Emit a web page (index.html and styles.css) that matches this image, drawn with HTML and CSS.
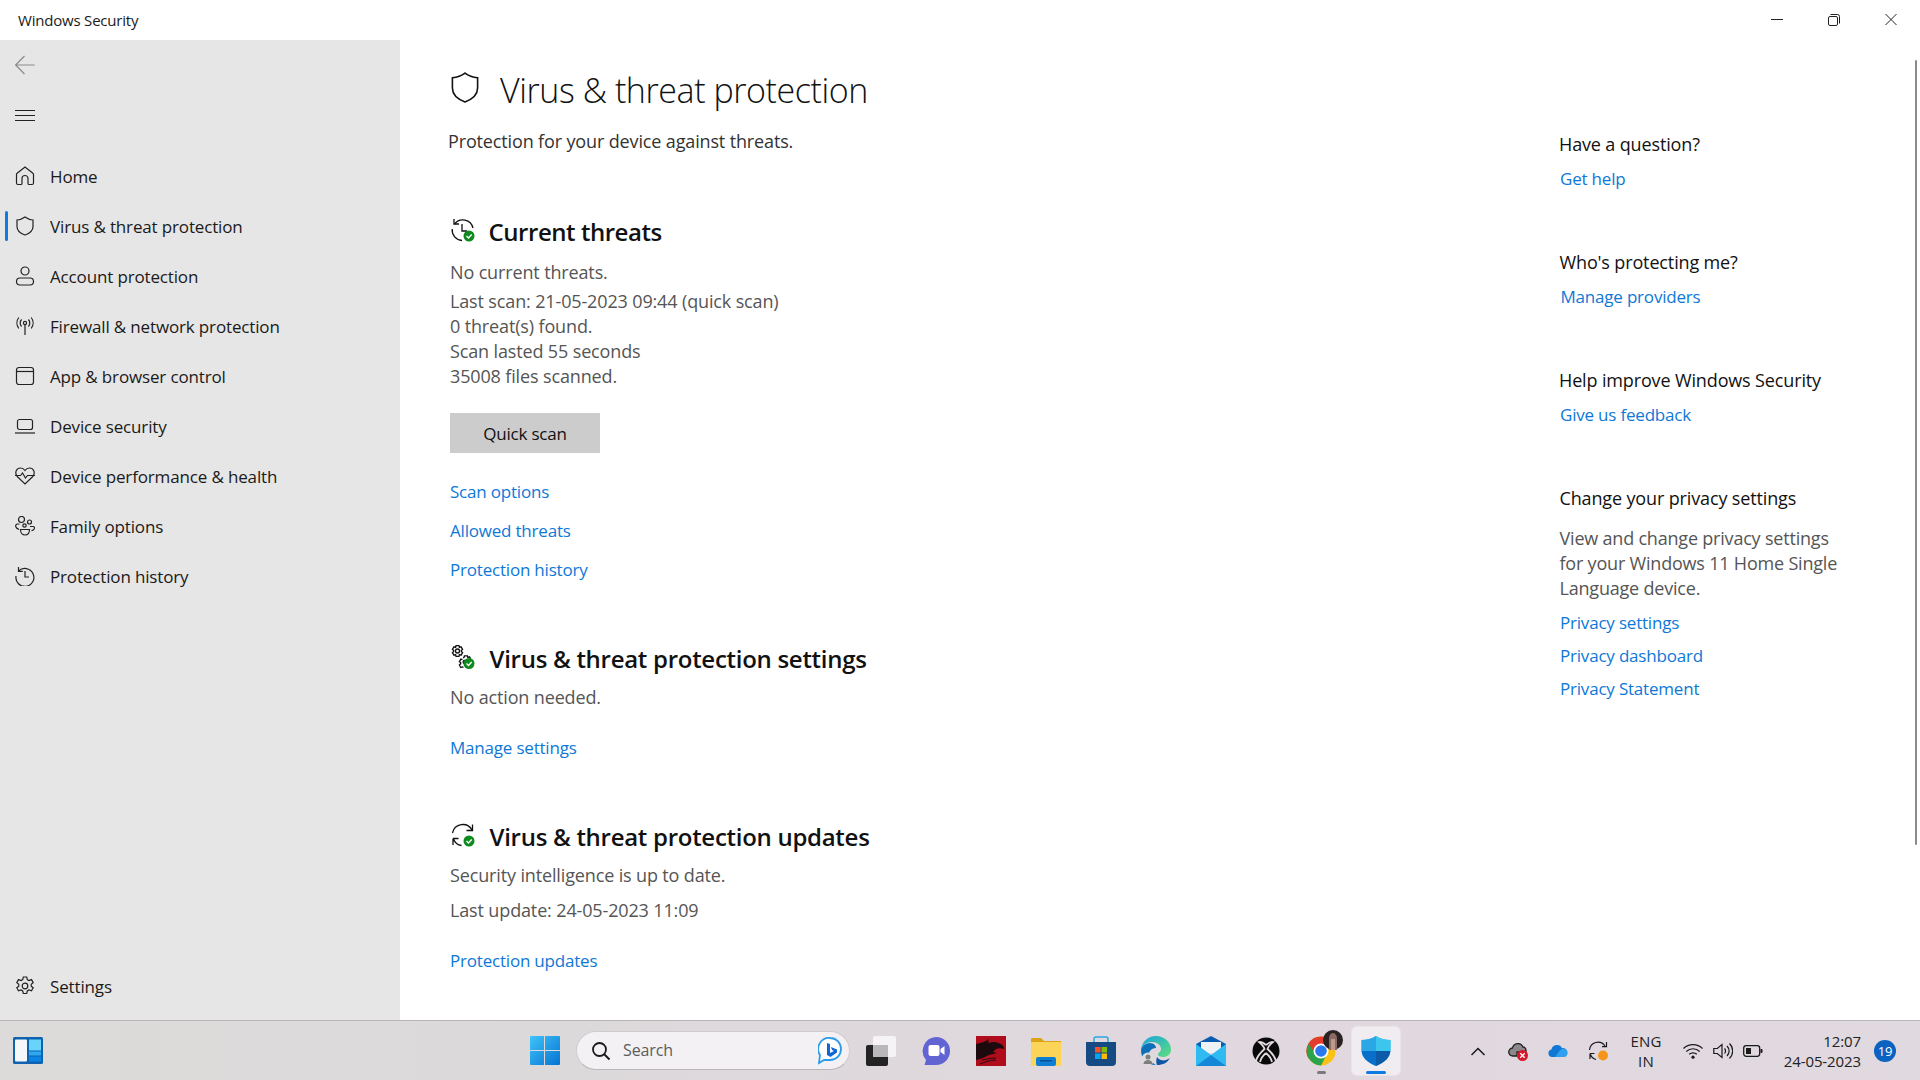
FILE: index.html
```html
<!DOCTYPE html>
<html lang="en">
<head>
<meta charset="utf-8">
<title>Windows Security</title>
<link rel="stylesheet" href="styles.css">
</head>
<body>
<div class="window">
  <header class="titlebar">
    <span class="app-name">Windows Security</span>
    <div class="controls">
      <span class="control"><svg width="14" height="14" viewBox="0 0 14 14"><path d="M1 6.500h12" stroke="#222" stroke-width="1" fill="none"/></svg></span>
      <span class="control"><svg width="14" height="14" viewBox="0 0 14 14" fill="none" stroke="#222" stroke-width="1"><rect x="1.500" y="3.500" width="9" height="9" rx="1.500"/><path d="M3.500 1.500h7a2 2 0 0 1 2 2v7"/></svg></span>
      <span class="control"><svg width="14" height="14" viewBox="0 0 14 14"><path d="M1.500 1l11 11M12.500 1l-11 11" stroke="#222" stroke-width="1" fill="none"/></svg></span>
    </div>
  </header>
  <div class="body">
    <nav class="sidebar">
      <div class="tool"><svg class="ico ico-back" viewBox="0 0 20 20"><path d="M.7 10h19M9.500 1L.7 10l8.800 9"/></svg></div>
      <div class="tool"><svg class="ico" viewBox="0 0 20 20"><path d="M0 5.500h20M0 10.500h20M0 15.500h20"/></svg></div>
      <ul class="nav">
        <li class="nav-item"><svg class="ico" viewBox="0 0 20 20"><path d="M1.500 17V8.500a1.500 1.500 0 0 1 .6-1.200L10 1l7.900 6.300a1.500 1.500 0 0 1 .6 1.200V17a1.500 1.500 0 0 1-1.500 1.500h-3a1 1 0 0 1-1-1v-5a3 3 0 0 0-6 0v5a1 1 0 0 1-1 1H3A1.500 1.500 0 0 1 1.500 17z"/></svg><span>Home</span></li>
        <li class="nav-item active"><svg class="ico" viewBox="0 0 20 20"><path d="M10 1c2.500 1.800 5 2.800 8 3v6.500c0 3.800-2.600 6.700-8 8.500-5.400-1.800-8-4.700-8-8.500V4c3-.2 5.500-1.200 8-3z"/></svg><span>Virus &amp; threat protection</span></li>
        <li class="nav-item"><svg class="ico" viewBox="0 0 20 20"><circle cx="10" cy="5" r="4"/><rect x="1.500" y="12" width="17" height="7" rx="3.500"/></svg><span>Account protection</span></li>
        <li class="nav-item"><svg class="ico" viewBox="0 0 20 20"><circle cx="10" cy="7" r="1.600"/><path d="M10 9v10M6.600 3.500a5 5 0 0 0 0 7M13.400 3.500a5 5 0 0 1 0 7M3.800 1.500a9 9 0 0 0 0 11M16.200 1.500a9 9 0 0 1 0 11"/></svg><span>Firewall &amp; network protection</span></li>
        <li class="nav-item"><svg class="ico" viewBox="0 0 20 20"><rect x="1.500" y="1.500" width="17" height="17" rx="2.500"/><path d="M1.500 5.500h17"/></svg><span>App &amp; browser control</span></li>
        <li class="nav-item"><svg class="ico" viewBox="0 0 20 20"><rect x="2.500" y="3.500" width="15" height="10" rx="2"/><path d="M0 17h20"/></svg><span>Device security</span></li>
        <li class="nav-item"><svg class="ico" viewBox="0 0 20 20"><path d="M2.200 10.500C-.8 6.500 1.500 2 5.500 2c2 0 3.500 1 4.500 2.500C11 3 12.500 2 14.500 2c4 0 6.300 4.500 3.300 8.500L10 18z"/><path d="M0 9.500h5.500l2-2.500 3 5 2-2.500H20"/></svg><span>Device performance &amp; health</span></li>
        <li class="nav-item"><svg class="ico" viewBox="0 0 20 20"><circle cx="6.500" cy="3.500" r="3"/><circle cx="14.500" cy="6" r="2"/><circle cx="9.500" cy="9.500" r="1.700"/><path d="M4.500 8H2.500a2 2 0 0 0-1.800 2.500c.5 1.500 1.500 2.500 3.300 2.800M15 10.500h3a1.500 1.500 0 0 1 1.500 2c-.5 1.300-1.500 2-3 2.200M5.500 13.500h9c0 3.500-2 5.500-4.500 5.500s-4.500-2-4.500-5.500z"/></svg><span>Family options</span></li>
        <li class="nav-item"><svg class="ico" viewBox="0 0 20 20"><path d="M3.500 1v4.300h4.300"/><path d="M3.600 5A9 9 0 1 1 1 10"/><path d="M10 5v6h4"/></svg><span>Protection history</span></li>
      </ul>
      <div class="nav-item nav-settings"><svg class="ico" viewBox="0 0 20 20"><circle cx="10" cy="10" r="2.800"/><path d="M8.300 1h3.400l.6 2.600 1.700.9 2.500-.9 1.700 3-2 1.700v1.800l2 1.600-1.700 3-2.500-.8-1.700 1-.6 2.600H8.300l-.6-2.600-1.700-1-2.500.8-1.700-3 2-1.600V8.300l-2-1.700 1.700-3 2.500.9 1.700-.9z"/></svg><span>Settings</span></div>
    </nav>

    <main class="main">
      <div class="page-head">
        <svg class="page-icon" viewBox="0 0 30 34"><path d="M15 1c4 3 8.500 4.500 13.500 5v11c0 6.500-4.500 11.500-13.500 15C6 28.500 1.500 23.500 1.500 17V6C6.500 5.500 11 4 15 1z"/></svg>
        <h1 class="page-title">Virus &amp; threat protection</h1>
      </div>
      <p class="page-sub">Protection for your device against threats.</p>

      <section class="sec sec-first">
        <div class="sec-head">
          <svg class="sec-icon" viewBox="0 0 24 24"><path class="line" d="M3 1v5h5"/><path class="line" d="M3.500 6A10.500 10.500 0 0 1 22 10M1.200 11A10.500 10.500 0 0 0 11 22.500"/><path class="line" d="M11 6v7h5"/><circle cx="18" cy="18" r="5.500" fill="#0f8a1f"/><path d="M15.500 18l2 2 3.200-3.500" stroke="#fff" stroke-width="1.400" fill="none"/></svg>
          <h2 class="sec-title sec-title-first">Current threats</h2>
        </div>
        <p class="line-text sec-lead">No current threats.</p>
        <div class="scan-lines">
          <p class="line-text">Last scan: 21-05-2023 09:44 (quick scan)</p>
          <p class="line-text">0 threat(s) found.</p>
          <p class="line-text">Scan lasted 55 seconds</p>
          <p class="line-text">35008 files scanned.</p>
        </div>
        <button class="btn">Quick scan</button>
        <div class="links">
          <a class="link">Scan options</a>
          <a class="link">Allowed threats</a>
          <a class="link">Protection history</a>
        </div>
      </section>

      <section class="sec sec-second">
        <div class="sec-head">
          <svg class="sec-icon" viewBox="0 0 24 24"><g class="line"><circle cx="6.500" cy="6" r="2"/><path d="M5 .7h3l.4 1.700 1.700-.6 1.500 2.500-1.300 1.200v1l1.300 1.200-1.500 2.500-1.700-.6L8 11.300H5l-.4-1.700-1.700.6L1.400 7.700 2.700 6.500v-1L1.400 4.300l1.500-2.500 1.700.6z"/><path d="M12 13l1-.5.400-1.600h3l.4 1.600 1.700-.6 1.200 2M12.500 22.500l-1-.6-1.700.6-1.400-2.500 1.300-1.200v-1l-1.300-1.200 1.400-2.500 1.700.6"/><circle cx="13.800" cy="17" r="1.700"/></g><circle cx="18" cy="18.500" r="5.500" fill="#0f8a1f"/><path d="M15.500 18.500l2 2 3.200-3.500" stroke="#fff" stroke-width="1.400" fill="none"/></svg>
          <h2 class="sec-title">Virus &amp; threat protection settings</h2>
        </div>
        <p class="line-text sec-lead-tight">No action needed.</p>
        <div class="links"><a class="link">Manage settings</a></div>
      </section>

      <section class="sec sec-third">
        <div class="sec-head">
          <svg class="sec-icon" viewBox="0 0 24 24"><path class="line" d="M1.500 10A10.500 10.500 0 0 1 21 7M21.500 1.500V7.500h-6"/><path class="line" d="M2 15.500h5.500M2 15.500V22M2.500 16a10 10 0 0 0 8 6.500"/><circle cx="18" cy="18" r="5.500" fill="#0f8a1f"/><path d="M15.500 18l2 2 3.200-3.500" stroke="#fff" stroke-width="1.400" fill="none"/></svg>
          <h2 class="sec-title">Virus &amp; threat protection updates</h2>
        </div>
        <p class="line-text sec-lead-tight">Security intelligence is up to date.</p>
        <p class="line-text sec-lead-tight">Last update: 24-05-2023 11:09</p>
        <div class="links"><a class="link">Protection updates</a></div>
      </section>
    </main>

    <aside class="aside">
      <div class="help">
        <h3 class="help-title">Have a question?</h3>
        <a class="link help-link">Get help</a>
      </div>
      <div class="help shift">
        <h3 class="help-title">Who's protecting me?</h3>
        <a class="link help-link">Manage providers</a>
      </div>
      <div class="help">
        <h3 class="help-title">Help improve Windows Security</h3>
        <a class="link help-link">Give us feedback</a>
      </div>
      <div class="help shift">
        <h3 class="help-title">Change your privacy settings</h3>
        <p class="help-text">View and change privacy settings for your Windows 11 Home Single Language device.</p>
        <div class="help-links">
          <a class="link help-link-n">Privacy settings</a>
          <a class="link help-link-n">Privacy dashboard</a>
          <a class="link help-link-n">Privacy Statement</a>
        </div>
      </div>
    </aside>
    <div class="scrollbar"></div>
  </div>

  <footer class="taskbar">
    <svg class="tb-widgets" viewBox="0 0 30 27"><rect width="30" height="27" rx="1.500" fill="#0f62b0"/><rect x="2" y="2.500" width="12" height="22" rx="1" fill="#f5f7fa"/><rect x="16" y="2.500" width="12" height="11" fill="#69d4fb"/><rect x="16" y="14.500" width="12" height="4" fill="#2fa8ee"/><rect x="16" y="19.500" width="12" height="5" fill="#0b84e3"/></svg>
    <svg class="tb-start" viewBox="0 0 30 29"><defs><linearGradient id="ws" x1="0" y1="0" x2="1" y2="1"><stop offset="0" stop-color="#3fc5fb"/><stop offset="1" stop-color="#0672d0"/></linearGradient></defs><path fill="url(#ws)" d="M1 0h13v14H0V1a1 1 0 0 1 1-1zM15 0h14a1 1 0 0 1 1 1v13H15zM0 15h14v14H1a1 1 0 0 1-1-1zM15 15h15v13a1 1 0 0 1-1 1H15z"/></svg>
    <div class="search">
      <svg class="search-ico" viewBox="0 0 20 20"><circle cx="8.500" cy="8.500" r="6.500" fill="none" stroke="#1a1a1a" stroke-width="1.800"/><path d="M13 13l5.500 5.500" stroke="#1a1a1a" stroke-width="2"/></svg>
      <span class="search-text">Search</span>
      <svg class="search-bing" viewBox="0 0 24 28"><path d="M12 1a11 11 0 0 1 0 22H6l-5 3 1-8A11 11 0 0 1 12 1z" fill="#fff" stroke="#2c9be8" stroke-width="1.800"/><path d="M9 6l3 1v9l4-2-2-1-1-3 6 2.500v3L12.500 20 9 18z" fill="#1266d4"/></svg>
    </div>
    <div class="apps">
      <span class="app"><svg class="app-ico" viewBox="0 0 30 30"><rect x="0" y="9" width="22" height="21" rx="2" fill="#232323"/><rect x="7" y="0" width="23" height="21" rx="2" fill="#f5f3f5"/><rect x="7" y="9" width="15" height="12" fill="#b9b7b9"/></svg></span>
      <span class="app"><svg class="app-ico" viewBox="0 0 30 30"><path d="M15 1a14 14 0 0 1 0 28H3.500L5 24A14 14 0 0 1 15 1z" fill="#6264d4"/><rect x="7.500" y="9" width="11" height="11" rx="2" fill="#fff"/><path d="M19.500 13l4-3v9l-4-3z" fill="#fff"/></svg></span>
      <span class="app"><svg class="app-ico" viewBox="0 0 30 30"><rect width="30" height="30" fill="#b00d1c"/><path d="M0 8c6-1 10-3 13-5-1 2-1 3 0 4 4-2 8-1 12 1 2 1 3 3 3 5-3-1-5-1-8 0l-3 3 4 1-8 2c-4 2-8 4-13 5z" fill="#1c0a0e"/><path d="M4 28c5-2 10-4 16-4M6 24c5-1 9-2 14-2" stroke="#2a0a10" stroke-width="1" fill="none"/></svg></span>
      <span class="app"><svg class="app-ico" viewBox="0 0 30 30"><path d="M0 3a1 1 0 0 1 1-1h9l3 3h17v5H0z" fill="#dca314"/><rect y="6" width="30" height="24" rx="1" fill="#fcd457"/><rect x="5" y="21" width="20" height="9" rx="2" fill="#0c7ed4"/><rect x="9" y="24" width="12" height="1.500" fill="#0a4f94"/></svg></span>
      <span class="app"><svg class="app-ico" viewBox="0 0 30 30"><path d="M8 6V3a2 2 0 0 1 2-2h10a2 2 0 0 1 2 2v3" fill="none" stroke="#28a8e6" stroke-width="1.500"/><path d="M0 6h30v20a4 4 0 0 1-4 4H4a4 4 0 0 1-4-4z" fill="#164a82"/><rect x="9" y="11" width="5.500" height="5.500" fill="#f35325"/><rect x="15.500" y="11" width="5.500" height="5.500" fill="#81bc06"/><rect x="9" y="17.500" width="5.500" height="5.500" fill="#05a6f0"/><rect x="15.500" y="17.500" width="5.500" height="5.500" fill="#ffba08"/></svg></span>
      <span class="app"><svg class="app-ico" viewBox="0 0 30 30"><defs><linearGradient id="eg" x1="0" y1="0" x2="1" y2="1"><stop offset="0" stop-color="#1aa2e0"/><stop offset="1" stop-color="#5de07a"/></linearGradient></defs><path d="M15 0c9 0 15 6.500 15 13.500 0 5-4 7.500-8 7.500-3 0-5-1-5-2.500 0-2 3-2 3-5.500C20 9 16 6 11 6 5 6 1.500 10 0 14 .5 6 7 0 15 0z" fill="url(#eg)"/><path d="M0 14c1-4 5-7 9-7 4 0 6 3 6 5-5 0-8 4-7 9 .5 3 3 6 7 8C6 29 0 23 0 14z" fill="#0c6fb8"/><path d="M16 29c6 0 10-2 13-7-3 2-6 3-9 2-2-.6-3-1.600-4-3-1 3-1 6 0 8z" fill="#0d57a6"/><circle cx="7" cy="23" r="6.500" fill="#dcdcdc"/><circle cx="7" cy="21" r="2.500" fill="#7e7e7e"/><path d="M2.500 28a4.500 4 0 0 1 9 0z" fill="#7e7e7e"/></svg></span>
      <span class="app"><svg class="app-ico" viewBox="0 0 30 30"><path d="M0 8L15 0l15 8v6H0z" fill="#0a5db0"/><path d="M5 6h20v11H5z" fill="#f0f3f6"/><path d="M0 8l15 11L30 8v22H0z" fill="#30baf2"/><path d="M0 30l15-11 15 11z" fill="#1488d6"/></svg></span>
      <span class="app"><svg class="app-ico app-ico-xbox" viewBox="0 0 28 28"><circle cx="14" cy="14" r="13.500" fill="#0a0a0a"/><path d="M14 8c-3-2.500-5-3.500-7-3 3 2.500 5 5 5.500 7C8 16 5 20 4 24M14 8c3-2.500 5-3.500 7-3-3 2.500-5 5-5.500 7 4.500 4 7.500 8 8.500 12M14 16c-3 2.500-5 5-6 9M14 16c3 2.500 5 5 6 9" stroke="#e0dade" stroke-width="1.800" fill="none"/></svg></span>
      <span class="app app-chrome"><svg class="app-ico" viewBox="0 0 30 30"><circle cx="15" cy="15" r="14.500" fill="#fbc116"/><path d="M15 .5A14.500 14.500 0 0 0 2.500 22.500L15 15l13-7A14.500 14.500 0 0 0 15 .5z" fill="#e33b2e"/><path d="M2.500 8A14.500 14.500 0 0 0 15 29.500L21 18 9 17z" fill="#2ba24c"/><circle cx="15" cy="15" r="7.500" fill="#fff"/><circle cx="15" cy="15" r="5.800" fill="#2a78ee"/></svg><svg class="avatar" viewBox="0 0 20 20"><circle cx="10" cy="10" r="10" fill="#2a2222"/><path d="M6 20V8c0-3 2-5 4-5s4 2 4 5v12z" fill="#8a6a62"/><path d="M8 20V9h4v11z" fill="#b99a8e"/></svg><i class="app-dot"></i></span>
      <span class="app app-active"><svg class="app-ico" viewBox="0 0 30 30"><path d="M15 0c4 2.500 9 4 14.500 4v10c0 7-5 12-14.500 16C5.500 26 .5 21 .5 14V4C6 4 11 2.500 15 0z" fill="#2fb8ea"/><path d="M15 0v15H.5v-1V4C6 4 11 2.500 15 0z" fill="#2aa7e4"/><path d="M.7 15H15v15C6 26 1 21.500.7 15z" fill="#0a6fc8"/><path d="M15 15h14.300c-.3 6.500-5.300 11-14.300 15z" fill="#0d5aa8"/><path d="M15 0c4 2.500 9 4 14.500 4v11H15z" fill="#3cc6ee"/></svg><i class="app-bar"></i></span>
    </div>
    <div class="tray">
      <svg class="tray-ico" viewBox="0 0 20 20"><path d="M3.500 14L10 7.500l6.500 6.500" fill="none" stroke="#1a1a1a" stroke-width="1.500"/></svg>
      <svg class="tray-ico" viewBox="0 0 20 20"><path d="M5 15a4 4 0 0 1-.5-8A5.500 5.500 0 0 1 15 6c1.500 0 3 1.500 3 3.500V11H9v4z" fill="#8a8888" stroke="#1f1f1f" stroke-width="1.300"/><circle cx="14.500" cy="14.500" r="5.500" fill="#d5182a"/><path d="M12.300 12.300l4.400 4.400M16.700 12.300l-4.400 4.400" stroke="#fff" stroke-width="1.300"/></svg>
      <svg class="tray-ico" viewBox="0 0 20 20"><path d="M4 16a3.800 3.800 0 0 1-.6-7.500A5.600 5.600 0 0 1 14 7.200a4.400 4.400 0 0 1 1.800 8.800z" fill="#0f78d4"/><path d="M7 16l4-5.500c1.500-2 3-3 4.500-2.800A4.200 4.200 0 0 1 16 16z" fill="#2ea0ee"/></svg>
      <svg class="tray-ico" viewBox="0 0 20 20"><g fill="none" stroke="#1a1a1a" stroke-width="1.200"><path d="M1.500 9A8.500 8.500 0 0 1 17 5M18.500 1v4.600H14"/><path d="M2 12.500h4.500M2 12.500V18M2.500 13.500A8 8 0 0 0 8 18.500"/></g><circle cx="15" cy="14.500" r="5" fill="#f5961a"/></svg>
      <div class="lang"><span>ENG</span><span>IN</span></div>
      <div class="tray-sys">
        <svg class="tray-ico" viewBox="0 0 20 20"><g fill="none" stroke="#1a1a1a" stroke-width="1.200"><path d="M.5 7.500a13.500 13.500 0 0 1 19 0M3.300 10.500a9.500 9.500 0 0 1 13.400 0M6.200 13.300a5.500 5.500 0 0 1 7.600 0"/></g><circle cx="10" cy="16.200" r="1.600" fill="#1a1a1a"/></svg>
        <svg class="tray-ico" viewBox="0 0 20 20"><g fill="none" stroke="#1a1a1a" stroke-width="1.200"><path d="M.8 7.500h3.500L9 3.500v13l-4.700-4H.8z"/><path d="M11.500 7.500a3.500 3.500 0 0 1 0 5M14 5a7 7 0 0 1 0 10M16.500 2.500a10.500 10.500 0 0 1 0 15"/></g></svg>
        <svg class="tray-ico" viewBox="0 0 20 20"><rect x=".7" y="4.700" width="16" height="10.600" rx="2.500" fill="none" stroke="#1a1a1a" stroke-width="1.300"/><rect x="3" y="7" width="5" height="6" fill="#1a1a1a"/><rect x="17.500" y="8" width="2" height="4" rx=".8" fill="#1a1a1a"/></svg>
      </div>
      <div class="clock"><span>12:07</span><span>24-05-2023</span></div>
      <div class="badge">19</div>
    </div>
  </footer>
</div>
</body>
</html>
```
FILE: styles.css
```css
* { box-sizing: border-box; }
html, body { margin: 0; padding: 0; height: 100%; }
body {
  font-family: "Open Sans", "Noto Sans", "Liberation Sans", sans-serif;
  color: #1a1a1a;
  background: #fff;
  overflow: hidden;
}
p, h1, h2, h3, ul { margin: 0; padding: 0; list-style: none; font-weight: 400; }
.window { display: flex; flex-direction: column; height: 1080px; }

.titlebar { height: 40px; display: flex; align-items: center; justify-content: space-between; padding: 0 1px 0 18px; flex: none; }
.app-name { font-size: 15px; letter-spacing: -.2px; color: #1a1a1a; }
.controls { display: flex; }
.control { width: 57px; height: 40px; display: flex; align-items: center; justify-content: center; }

.body { position: relative; flex: 1; display: flex; min-height: 0; }

.sidebar { width: 400px; flex: none; background: #e6e6e6; display: flex; flex-direction: column; }
.tool { height: 50px; display: flex; align-items: center; padding-left: 15px; }
.ico { width: 20px; height: 20px; flex: none; fill: none; stroke: #222; stroke-width: 1.200; }
.ico-back { stroke: #8c8c8c; }
.nav { margin-top: 11px; }
.nav-item { position: relative; height: 50px; display: flex; align-items: center; gap: 15px; padding-left: 15px; font-size: 17px; letter-spacing: -.15px; }
.nav-item.active::before { content: ""; position: absolute; left: 5px; top: 10px; width: 3px; height: 30px; border-radius: 2px; background: #0f7ae0; }
.nav-settings { margin-top: auto; margin-bottom: 9px; }

.main { flex: 1; padding: 26px 0 0 50px; min-width: 0; }
.page-head { display: flex; align-items: center; height: 48px; gap: 21px; margin-left: 1px; }
.page-icon { width: 28px; height: 32px; flex: none; fill: none; stroke: #111; stroke-width: 1.700; margin-top: -4px; }
.page-title { font-size: 34px; font-weight: 300; letter-spacing: -.43px; line-height: 50px; color: #111; }
.page-sub { margin: 15px 0 0 -2px; font-size: 18px; line-height: 25px; letter-spacing: -.14px; color: #333; }

.sec-first { margin-top: 62px; }
.sec-second { margin-top: 61px; }
.sec-third { margin-top: 61px; }
.sec-head { display: flex; align-items: center; height: 32px; gap: 14.500px; padding-left: 1px; }
.sec-icon { width: 24px; height: 24px; flex: none; margin-top: -4px; }
.sec-icon .line, .sec-icon .line * { fill: none; stroke: #111; stroke-width: 1.300; }
.sec-title { font-size: 24px; font-weight: 600; line-height: 32px; letter-spacing: -.28px; color: #111; }
.sec-title-first { margin-left: -1px; letter-spacing: -.45px; }

.line-text { font-size: 18px; line-height: 25px; letter-spacing: -.14px; color: #555; }
.sec-lead { margin-top: 12px; }
.sec-lead-tight { margin-top: 10px; }
.scan-lines { margin-top: 4px; }
.btn { display: block; width: 150px; height: 40px; margin-top: 24px; border: 0; background: #cccccc; font: inherit; font-size: 17px; letter-spacing: -.2px; color: #111; }
.links { display: flex; flex-direction: column; align-items: flex-start; gap: 14px; margin-top: 25px; }
.sec-first .links { margin-top: 26px; }
.link { font-size: 17px; line-height: 25px; letter-spacing: -.2px; color: #0d78d8; }

.aside { width: 362px; flex: none; padding: 91.500px 0 0 1px; }
.help { margin-bottom: 59px; }
.help.shift { margin-left: .5px; }
.help-title { font-size: 18px; line-height: 25px; letter-spacing: -.14px; color: #111; }
.help-link { display: block; margin: 9px 0 0 1px; }
.help-text { width: 290px; margin: 15px 0 0 0; font-size: 18px; line-height: 25px; letter-spacing: -.2px; color: #555; }
.help-links { display: flex; flex-direction: column; align-items: flex-start; gap: 8px; margin: 9px 0 0 .5px; }
.help-link-n { display: block; }
.scrollbar { position: absolute; left: 1915px; top: 20px; width: 2px; height: 785px; background: #8a8a8a; border-radius: 1px; }

.taskbar {
  height: 60px; flex: none; display: flex; align-items: center; padding-left: 13px;
  background: linear-gradient(90deg, #dcdbd9 0%, #dcd9db 30%, #e0d8de 60%, #e0d9df 100%);
  border-top: 1px solid #b8b5b8;
}
.tb-widgets { width: 30px; height: 27px; flex: none; }
.tb-start { width: 30px; height: 29px; flex: none; margin-left: 487px; }
.search { width: 274px; height: 39px; flex: none; margin-left: 16px; display: flex; align-items: center; padding: 0 0 0 14px; background: #f3f1f3; border-radius: 20px; border: 1px solid #cfcbce; border-bottom-color: #b9b5b8; }
.search-ico { width: 20px; height: 20px; flex: none; }
.search-text { margin: -2px 0 0 12px; font-size: 16px; letter-spacing: -.1px; color: #5c5c5c; flex: 1; }
.search-bing { width: 24px; height: 28px; flex: none; margin-right: 7px; }
.apps { display: flex; margin-left: 3.500px; flex: none; }
.app { position: relative; width: 55px; height: 48px; display: flex; align-items: center; justify-content: center; }
.app-ico { width: 30px; height: 30px; flex: none; }
.app-ico-xbox { width: 28px; height: 28px; }
.app-active { background: #f0ecf0; border-radius: 5px; width: 48px; margin-left: 3.500px; margin-right: 3.500px; box-shadow: 0 0 0 1px #e8e4e8; }
.app-bar { position: absolute; left: 14px; bottom: 1px; width: 20px; height: 3px; border-radius: 2px; background: #0f7ae0; }
.app-dot { position: absolute; left: 23px; bottom: 1px; width: 9px; height: 3px; border-radius: 2px; background: #7a7a7a; }
.avatar { position: absolute; left: 29px; top: 3px; width: 20px; height: 20px; }
.tray { display: flex; align-items: center; flex: none; margin-left: 64.500px; gap: 20px; }
.tray-ico { width: 20px; height: 20px; flex: none; }
.lang { display: flex; flex-direction: column; align-items: center; width: 28px; margin-left: 4px; font-size: 15px; line-height: 20px; color: #222; letter-spacing: .2px; }
.tray-sys { display: flex; gap: 10px; margin-left: 3px; }
.clock { display: flex; flex-direction: column; align-items: flex-end; width: 98px; margin-left: -20px; font-size: 15px; line-height: 20px; color: #222; letter-spacing: -.1px; }
.badge { width: 22px; height: 22px; margin-left: -7px; border-radius: 50%; background: #0b62c0; color: #fff; font-size: 13px; display: flex; align-items: center; justify-content: center; letter-spacing: -.3px; }
```
